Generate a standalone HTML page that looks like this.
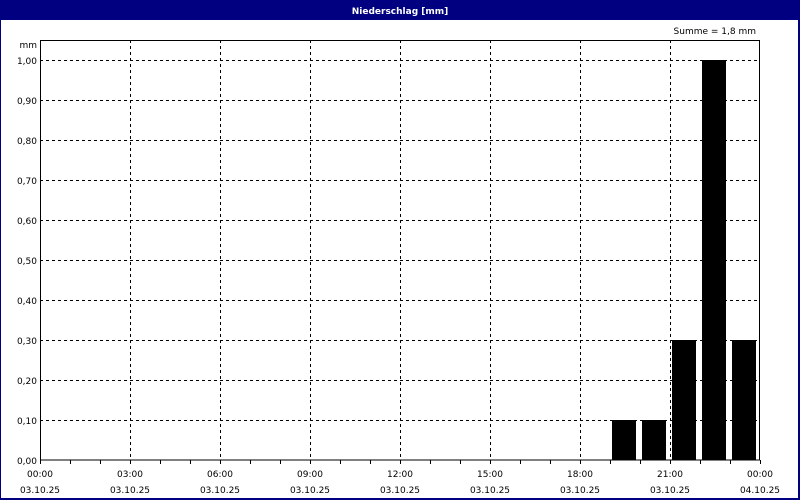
<!DOCTYPE html>
<html><head><meta charset="utf-8"><style>
html,body{margin:0;padding:0;background:#fff}
svg{display:block}
text{font-family:"DejaVu Sans","Liberation Sans",sans-serif;font-size:9px;fill:#000}
</style></head><body>
<svg width="800" height="500" xmlns="http://www.w3.org/2000/svg">
<rect x="0" y="0" width="800" height="500" fill="#000080"/>
<rect x="1" y="20" width="797" height="478" fill="#fff"/>
<text x="400" y="14" text-anchor="middle" style="font-weight:bold;fill:#fff;font-size:9px">Niederschlag [mm]</text>
<text x="756" y="34" text-anchor="end">Summe = 1,8 mm</text>
<text x="37" y="48" text-anchor="end">mm</text>
<g stroke="#000" stroke-width="1" stroke-dasharray="3,3" shape-rendering="crispEdges">
<line x1="40" y1="60.5" x2="760" y2="60.5"/>
<line x1="40" y1="100.5" x2="760" y2="100.5"/>
<line x1="40" y1="140.5" x2="760" y2="140.5"/>
<line x1="40" y1="180.5" x2="760" y2="180.5"/>
<line x1="40" y1="220.5" x2="760" y2="220.5"/>
<line x1="40" y1="260.5" x2="760" y2="260.5"/>
<line x1="40" y1="300.5" x2="760" y2="300.5"/>
<line x1="40" y1="340.5" x2="760" y2="340.5"/>
<line x1="40" y1="380.5" x2="760" y2="380.5"/>
<line x1="40" y1="420.5" x2="760" y2="420.5"/>
<line x1="130.5" y1="40" x2="130.5" y2="460"/>
<line x1="220.5" y1="40" x2="220.5" y2="460"/>
<line x1="310.5" y1="40" x2="310.5" y2="460"/>
<line x1="400.5" y1="40" x2="400.5" y2="460"/>
<line x1="490.5" y1="40" x2="490.5" y2="460"/>
<line x1="580.5" y1="40" x2="580.5" y2="460"/>
<line x1="670.5" y1="40" x2="670.5" y2="460"/>
</g>
<g fill="#000">
<rect x="612" y="420" width="24" height="40"/>
<rect x="642" y="420" width="24" height="40"/>
<rect x="672" y="340" width="24" height="120"/>
<rect x="702" y="60" width="24" height="400"/>
<rect x="732" y="340" width="24" height="120"/>
</g>
<rect x="40.5" y="40.5" width="719" height="419.5" fill="none" stroke="#000" shape-rendering="crispEdges"/>
<g stroke="#000" shape-rendering="crispEdges">
<line x1="40.5" y1="460" x2="40.5" y2="464"/><line x1="70.5" y1="460" x2="70.5" y2="464"/><line x1="100.5" y1="460" x2="100.5" y2="464"/><line x1="130.5" y1="460" x2="130.5" y2="464"/><line x1="160.5" y1="460" x2="160.5" y2="464"/><line x1="190.5" y1="460" x2="190.5" y2="464"/><line x1="220.5" y1="460" x2="220.5" y2="464"/><line x1="250.5" y1="460" x2="250.5" y2="464"/><line x1="280.5" y1="460" x2="280.5" y2="464"/><line x1="310.5" y1="460" x2="310.5" y2="464"/><line x1="340.5" y1="460" x2="340.5" y2="464"/><line x1="370.5" y1="460" x2="370.5" y2="464"/><line x1="400.5" y1="460" x2="400.5" y2="464"/><line x1="430.5" y1="460" x2="430.5" y2="464"/><line x1="460.5" y1="460" x2="460.5" y2="464"/><line x1="490.5" y1="460" x2="490.5" y2="464"/><line x1="520.5" y1="460" x2="520.5" y2="464"/><line x1="550.5" y1="460" x2="550.5" y2="464"/><line x1="580.5" y1="460" x2="580.5" y2="464"/><line x1="610.5" y1="460" x2="610.5" y2="464"/><line x1="640.5" y1="460" x2="640.5" y2="464"/><line x1="670.5" y1="460" x2="670.5" y2="464"/><line x1="700.5" y1="460" x2="700.5" y2="464"/><line x1="730.5" y1="460" x2="730.5" y2="464"/><line x1="760.5" y1="460" x2="760.5" y2="464"/>
</g>
<g text-anchor="end">
<text x="37" y="64">1,00</text><text x="37" y="104">0,90</text><text x="37" y="144">0,80</text><text x="37" y="184">0,70</text><text x="37" y="224">0,60</text><text x="37" y="264">0,50</text><text x="37" y="304">0,40</text><text x="37" y="344">0,30</text><text x="37" y="384">0,20</text><text x="37" y="424">0,10</text><text x="37" y="464">0,00</text>
</g>
<g text-anchor="middle">
<text x="40" y="477">00:00</text><text x="40" y="493">03.10.25</text>
<text x="130" y="477">03:00</text><text x="130" y="493">03.10.25</text>
<text x="220" y="477">06:00</text><text x="220" y="493">03.10.25</text>
<text x="310" y="477">09:00</text><text x="310" y="493">03.10.25</text>
<text x="400" y="477">12:00</text><text x="400" y="493">03.10.25</text>
<text x="490" y="477">15:00</text><text x="490" y="493">03.10.25</text>
<text x="580" y="477">18:00</text><text x="580" y="493">03.10.25</text>
<text x="670" y="477">21:00</text><text x="670" y="493">03.10.25</text>
<text x="760" y="477">00:00</text><text x="760" y="493">04.10.25</text>
</g>
</svg>
</body></html>
